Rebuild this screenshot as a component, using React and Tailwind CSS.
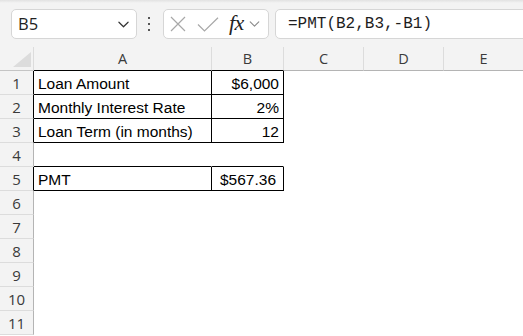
import React from "react";

const COLS = ["A", "B", "C", "D", "E"];

const data = {
  1: ["Loan Amount", "$6,000"],
  2: ["Monthly Interest Rate", "2%"],
  3: ["Loan Term (in months)", "12"],
  5: ["PMT", "$567.36"],
};

function Chevron({ className }) {
  return (
    <svg className={className} viewBox="0 0 12 7" fill="none">
      <path d="M1 1l5 5 5-5" stroke="currentColor" strokeWidth="1.3" strokeLinecap="round" strokeLinejoin="round" />
    </svg>
  );
}

function TopBar() {
  return (
    <div className="relative h-[47px] bg-[#f3f3f3] flex items-start pt-[9px]">
      <div className="absolute left-0 right-0 top-0 h-[3px] bg-gradient-to-b from-[#e2e2e2] to-[#f3f3f3]" />
      <div className="ml-[11px] w-[126px] h-[30px] rounded-[5px] border border-[#d6d6d6] bg-white flex items-center pl-[6px] pr-[7px] justify-between">
        <span className="text-[16.5px] text-[#222] font-['Open_Sans',sans-serif] leading-none">B5</span>
        <Chevron className="w-[11px] h-[7px] text-[#333]" />
      </div>
      <div className="ml-[11px] w-[2px] h-[30px] flex flex-col justify-center gap-[4px]">
        <div className="w-[2px] h-[2px] bg-[#555]" />
        <div className="w-[2px] h-[2px] bg-[#555]" />
        <div className="w-[2px] h-[2px] bg-[#555]" />
      </div>
      <div className="ml-[13px] w-[106px] h-[30px] rounded-[5px] border border-[#d6d6d6] bg-white flex items-center pl-[6px]">
        <svg className="w-[16px] h-[16px]" viewBox="0 0 16 16" fill="none">
          <path d="M1 1l14 14M15 1L1 15" stroke="#a8a8a8" strokeWidth="1.2" />
        </svg>
        <svg className="ml-[11px] w-[22px] h-[15px]" viewBox="0 0 22 15" fill="none">
          <path d="M1 7.5l6.5 6.5L21 0.8" stroke="#a8a8a8" strokeWidth="1.2" />
        </svg>
        <span className="ml-[10px] text-[22px] italic text-[#222] font-['Liberation_Serif',serif] leading-none tracking-[-0.5px] pb-[2px]">fx</span>
        <Chevron className="ml-[5px] w-[11px] h-[6px] text-[#8a8a8a]" />
      </div>
      <div className="ml-[6px] flex-1 -mr-[10px] h-[30px] rounded-[5px] border border-[#d6d6d6] bg-white flex items-center pl-[12px]">
        <span className="text-[16px] text-[#1e1e1e] font-['Liberation_Mono',monospace] leading-none">=PMT(B2,B3,-B1)</span>
      </div>
    </div>
  );
}

function Grid() {
  const rows = [];
  for (let r = 1; r <= 11; r++) rows.push(r);
  const boxed = (r) => r === 1 || r === 2 || r === 3 || r === 5;
  return (
    <div className="grid grid-cols-[34px_178px_72px_80px_80px_80px] auto-rows-[24px]">
      <div className="relative bg-[#f3f3f3] border-r border-b border-r-[#dcdcdc] border-b-[#c4c4c4]">
        <svg className="absolute left-[13px] top-[5px] w-[18px] h-[15px]" viewBox="0 0 18 15">
          <path d="M18 0V15H0Z" fill="#dcdcdc" />
        </svg>
      </div>
      {COLS.map((c, i) => (
        <div
          key={c}
          className={`bg-[#f3f3f3] border-r border-b border-r-[#dcdcdc] flex items-center justify-center text-[14.5px] text-[#3a3a3a] font-['Open_Sans',sans-serif] leading-none pt-[1px] ${i < 2 ? "border-b-black" : "border-b-[#b4b4b4]"}`}
        >
          {c}
        </div>
      ))}
      {rows.map((r) => (
        <React.Fragment key={r}>
          <div
            className={`bg-[#f3f3f3] border-r border-b border-b-[#dcdcdc] flex items-center justify-center text-[15px] text-[#3a3a3a] font-['Open_Sans',sans-serif] leading-none pt-[2px] ${boxed(r) ? "border-r-black" : "border-r-[#b4b4b4]"}`}
          >
            {r}
          </div>
          {[0, 1].map((ci) => {
            const b = boxed(r);
            const bottomBlack = b || r === 4;
            const val = data[r] ? data[r][ci] : "";
            const align = ci === 1 ? "justify-end" : "justify-start";
            const pad = ci === 1 ? (r === 5 ? "pr-[7px]" : "pr-[4px]") : "pl-[4px]";
            return (
              <div
                key={ci}
                className={`border-r border-b flex items-end ${align} ${pad} pb-[1px] text-[15.5px] text-black font-['Liberation_Sans',Arial,sans-serif] leading-[18px] whitespace-nowrap ${b ? "border-r-black" : "border-r-transparent"} ${bottomBlack ? "border-b-black" : "border-b-transparent"}`}
              >
                {val}
              </div>
            );
          })}
          <div />
          <div />
          <div />
        </React.Fragment>
      ))}
    </div>
  );
}

export default function App() {
  return (
    <div className="w-[523px] h-[336px] overflow-hidden bg-white">
      <TopBar />
      <Grid />
    </div>
  );
}
